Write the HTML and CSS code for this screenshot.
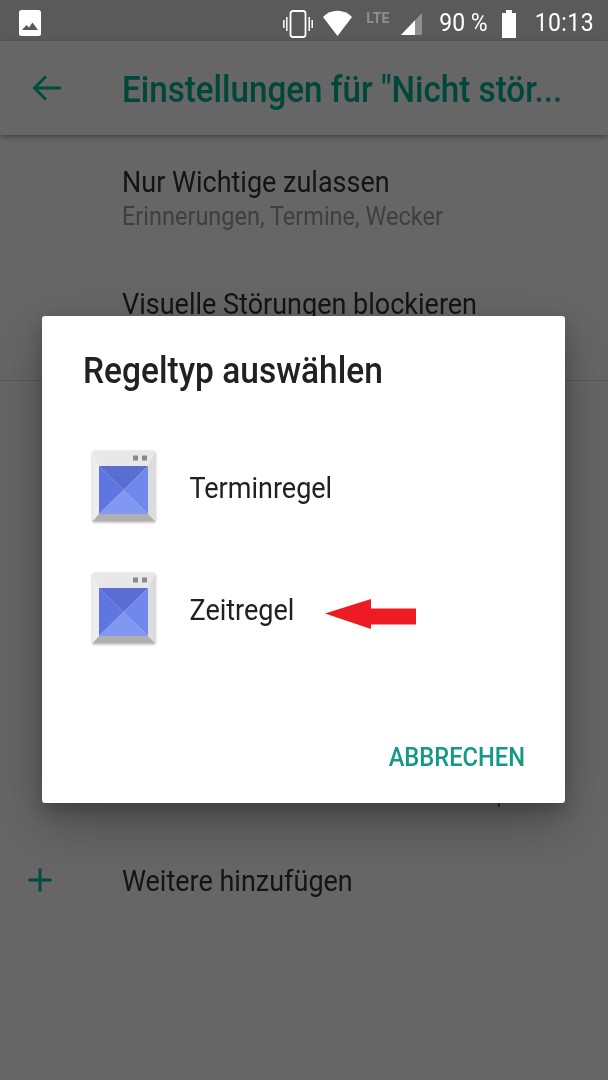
FILE: index.html
```html
<!DOCTYPE html>
<html lang="de">
<head>
<meta charset="utf-8">
<title>Regeltyp auswählen</title>
<link rel="stylesheet" href="styles.css">
</head>
<body>
<div class="screen">
  <header class="status">
    <svg class="st-img" width="22" height="26" viewBox="0 0 22 26"><rect x="0" y="0" width="22" height="26" rx="2.500" fill="#fff"/><path d="M3 20l4.500-5 2.500 2.500 3.500-5 5.500 7.500z" fill="#5a5a5a"/></svg>
    <div class="st-right">
      <svg class="st-vib" width="30" height="28" viewBox="0 0 30 28"><rect x="7.500" y="1" width="15" height="26" rx="2.500" fill="none" stroke="#fff" stroke-width="1.800"/><path d="M3.800 7v14M26.200 7v14M0.800 10v8M29.200 10v8" stroke="#fff" stroke-width="1.500"/></svg>
      <svg class="st-wifi" width="29" height="26" viewBox="0 0 29 26"><path d="M0 7C8 -1.500 21 -1.500 29 7L14.500 26z" fill="#fff"/></svg>
      <span class="st-lte">LTE</span>
      <svg class="st-sig" width="21" height="26" viewBox="0 0 21 26"><path d="M0 25L21 3V25z" fill="#8f8f8f"/><path d="M0 25L14 10.300V25z" fill="#fff"/></svg>
      <span class="st-pct">90 %</span>
      <svg class="st-bat" width="14" height="28" viewBox="0 0 14 28"><path d="M4 0h6v3h4v25H0V3h4z" fill="#fff"/></svg>
      <span class="st-time">10:13</span>
    </div>
  </header>
  <div class="appbar">
    <svg class="back" width="30" height="30" viewBox="0 0 30 30"><path d="M29 15H3M14 3.500L2.500 15 14 26.500" fill="none" stroke="#004d40" stroke-width="3"/></svg>
    <h1 class="title">Einstellungen für "Nicht stör...</h1>
  </div>
  <main class="list">
    <div class="row row-first">
      <div class="row-title">Nur Wichtige zulassen</div>
      <div class="row-sub">Erinnerungen, Termine, Wecker</div>
    </div>
    <div class="row row-second">
      <div class="row-title">Visuelle Störungen blockieren</div>
    </div>
    <hr class="divider">
    <div class="row-add">
      <svg class="plus" width="26" height="26" viewBox="0 0 26 26"><path d="M13 1.500v23M1.500 13h23" stroke="#004d40" stroke-width="3"/></svg>
      <span class="row-title">Weitere hinzufügen</span>
    </div>
  </main>
  <div class="peek"></div>
  <section class="dialog">
    <h2 class="dlg-title">Regeltyp auswählen</h2>
    <div class="dlg-items">
      <div class="dlg-item">
        <svg class="rule-icon" width="64" height="72" viewBox="0 0 64 72">
          <rect x="0.500" y="0.500" width="63" height="71" rx="2" fill="#e8e8e8"/>
          <path d="M0.500 70V2l6.500 14v48z" fill="#eeeeee"/>
          <path d="M63.500 70V2l-7.500 14v48z" fill="#dcdcdc"/>
          <path d="M0.500 71.500L7 64h49l7.500 7.500z" fill="#b0b0b0"/>
          <rect x="41" y="5.500" width="5" height="5" fill="#8a8a8a"/>
          <rect x="50" y="5.500" width="5" height="5" fill="#8a8a8a"/>
          <path d="M7 16h49L31.500 40z" fill="#5a6dd0"/>
          <path d="M7 16L31.500 40 7 64z" fill="#5f75e2"/>
          <path d="M56 16L31.500 40 56 64z" fill="#7088ec"/>
          <path d="M7 64L31.500 40 56 64z" fill="#8098f2"/>
        </svg>
        <span class="dlg-label">Terminregel</span>
      </div>
      <div class="dlg-item dlg-item-second">
        <svg class="rule-icon" width="64" height="72" viewBox="0 0 64 72">
          <rect x="0.500" y="0.500" width="63" height="71" rx="2" fill="#e8e8e8"/>
          <path d="M0.500 70V2l6.500 14v48z" fill="#eeeeee"/>
          <path d="M63.500 70V2l-7.500 14v48z" fill="#dcdcdc"/>
          <path d="M0.500 71.500L7 64h49l7.500 7.500z" fill="#b0b0b0"/>
          <rect x="41" y="5.500" width="5" height="5" fill="#8a8a8a"/>
          <rect x="50" y="5.500" width="5" height="5" fill="#8a8a8a"/>
          <path d="M7 16h49L31.500 40z" fill="#5a6dd0"/>
          <path d="M7 16L31.500 40 7 64z" fill="#5f75e2"/>
          <path d="M56 16L31.500 40 56 64z" fill="#7088ec"/>
          <path d="M7 64L31.500 40 56 64z" fill="#8098f2"/>
        </svg>
        <span class="dlg-label">Zeitregel</span>
        <svg class="arrow" width="91" height="32" viewBox="0 0 91 32"><path d="M0 15.500L46 1v9.500h45v16H46V31z" fill="#ed1c24"/></svg>
      </div>
    </div>
    <div class="dlg-actions"><span class="dlg-btn">ABBRECHEN</span></div>
  </section>
</div>
</body>
</html>
```
FILE: styles.css
```css
* { box-sizing: border-box; }
html, body { margin: 0; padding: 0; }
body { font-family: Roboto, "Noto Sans", sans-serif; background: #666; }
.screen { position: relative; width: 608px; height: 1080px; overflow: hidden; background: #666; }

.status { height: 41px; background: #5a5a5a; display: flex; align-items: flex-start; justify-content: space-between; padding: 10px 14px 0 19px; color: #fff; }
.st-right { display: flex; align-items: flex-start; }
.st-vib { margin-right: 10px; }
.st-wifi { margin-right: 14px; }
.st-lte { font-size: 14px; line-height: 14px; font-weight: 700; color: #8f8f8f; letter-spacing: 0.3px; width: 26px; margin-right: 9px; transform: scaleY(1.1); }
.st-sig { margin-right: 17px; }
.st-pct { font-size: 23px; line-height: 24px; margin-top: 1px; margin-right: 14px; transform: scaleY(1.1); }
.st-bat { margin-right: 19px; }
.st-time { font-size: 23px; line-height: 24px; letter-spacing: 0.4px; margin-top: 1px; transform: scaleY(1.1); }

.appbar { height: 94px; background: #666; display: flex; align-items: center; padding: 0 0 0 32px; box-shadow: 0 2px 5px rgba(0,0,0,0.35); position: relative; }
.back { flex: none; margin-right: 60px; }
.title { margin: 2px 0 0; font-size: 33.200px; font-weight: 500; color: #00473b; white-space: nowrap; transform: scaleY(1.1); }

.list { display: flex; flex-direction: column; }
.row { padding-left: 122px; }
.row-first { padding-top: 31px; }
.row-second { padding-top: 58px; }
.row-title { font-size: 27px; line-height: 32px; color: #141414; transform: scaleY(1.1); }
.row-sub { font-size: 23.500px; line-height: 28px; color: #3f3f3f; margin-top: 4px; transform: scaleY(1.1); }
.divider { border: 0; height: 1px; background: #595959; margin: 60px 0 0; }
.row-add { display: flex; align-items: center; padding-left: 27px; margin-top: 484px; }
.plus { margin-right: 69px; margin-top: -2px; }

.peek { position: absolute; left: 498px; top: 803px; width: 2px; height: 4px; background: #333; }
.dialog { position: absolute; left: 42px; top: 316px; width: 523px; height: 487px; background: #fff; border-radius: 3px; box-shadow: 0 20px 50px rgba(0,0,0,0.28), 0 8px 16px rgba(0,0,0,0.18); display: flex; flex-direction: column; }
.dlg-title { margin: 0 0 0 41px; padding: 35px 0 0; font-size: 33.500px; line-height: 36px; font-weight: 500; color: #212121; transform: scaleY(1.1); }
.dlg-items { display: flex; flex-direction: column; padding: 63px 0 0 50px; gap: 50px; }
.dlg-item { display: flex; align-items: center; height: 72px; }
.rule-icon { flex: none; filter: drop-shadow(0 1px 1px rgba(0,0,0,0.25)); }
.dlg-label { font-size: 27px; color: #212121; margin-left: 33.500px; margin-top: 4px; transform: scaleY(1.1); }
.arrow { margin-left: 31px; margin-top: 11px; }
.dlg-actions { margin-top: auto; display: flex; justify-content: flex-end; padding: 0 40px 32px 0; }
.dlg-btn { font-size: 23.700px; line-height: 28px; font-weight: 500; color: #129a87; transform: scaleY(1.1); }
```
